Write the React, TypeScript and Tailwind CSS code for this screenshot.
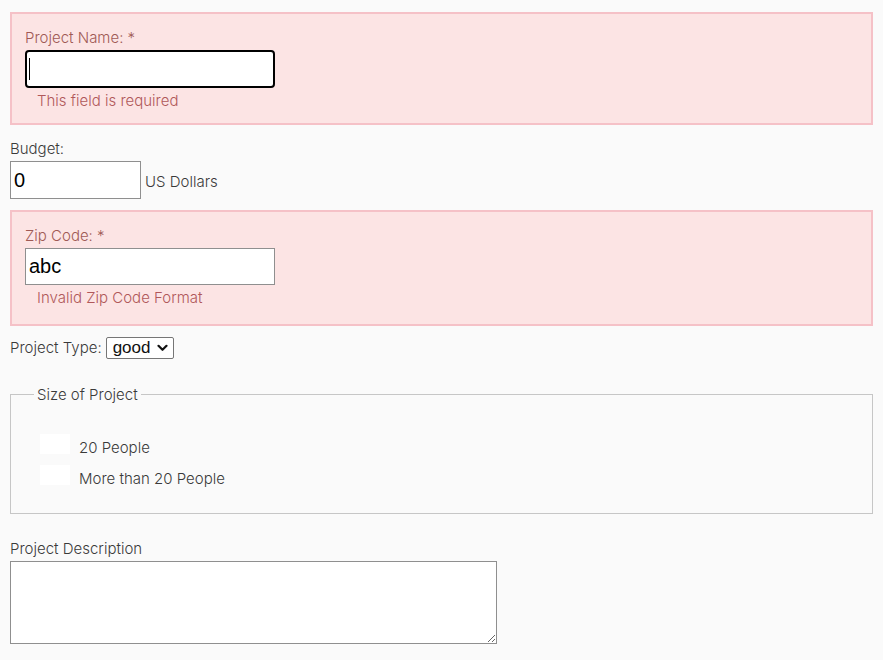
import React from 'react';

function ErrorBox({ label, error, children, last }: { label: string; error: string; children: React.ReactNode; last?: boolean }) {
  return (
    <div className={`border-2 border-[#f5c1c7] bg-[#fce4e4] px-[13px] pt-[14px] ${last ? 'pb-[18px]' : 'pb-[14px]'}`}>
      <label className="block h-[20px] leading-[20px] text-[#a05a55]">{label}</label>
      <div className="mt-[2px]">{children}</div>
      <div className="mt-[4px] pl-[12px] leading-[17px] text-[#b0585a]">{error}</div>
    </div>
  );
}

export default function App() {
  return (
    <div className="min-h-screen bg-[#fafafa] px-[10px] pt-[12px] pb-4 font-['Inter_Light','Inter','Noto_Sans',sans-serif] text-[15px] font-light text-[#3a3a3a]">
      {/* Project name */}
      <ErrorBox label="Project Name: *" error="This field is required">
        <div className="relative h-[38px] w-[250px]">
          <input
            type="text"
            defaultValue=""
            className="h-[38px] w-[250px] rounded-[4px] border-2 border-black bg-white px-[3px] font-['Liberation_Sans',Arial,sans-serif] text-[20px] font-normal text-black outline-none"
          />
          <span className="pointer-events-none absolute left-[4px] top-[8px] h-[22px] w-px bg-black" />
        </div>
      </ErrorBox>

      {/* Budget */}
      <div className="mt-[15px] leading-[17px]">Budget:</div>
      <div className="mt-[4px] flex items-center">
        <input
          type="text"
          defaultValue="0"
          className="h-[38px] w-[131px] border border-[#8f8f8f] bg-white px-[3px] font-['Liberation_Sans',Arial,sans-serif] text-[20px] font-normal text-black outline-none"
        />
        <span className="ml-[4px] pt-[4px]">US Dollars</span>
      </div>

      {/* Zip */}
      <div className="mt-[11px]">
        <ErrorBox label="Zip Code: *" error="Invalid Zip Code Format" last>
          <input
            type="text"
            defaultValue="abc"
            className="h-[37px] w-[250px] border border-[#8f8f8f] bg-white px-[3px] font-['Liberation_Sans',Arial,sans-serif] text-[20px] font-normal text-black outline-none"
          />
        </ErrorBox>
      </div>

      {/* Project type */}
      <div className="mt-[11px] flex h-[22px] items-center">
        <span>Project Type:</span>
        <div className="ml-[4px] flex h-[22px] w-[68px] items-center justify-between rounded-[2px] border border-[#767676] bg-white pl-[6px] pr-[5px] font-['Liberation_Sans',Arial,sans-serif] text-[17px] font-normal leading-none text-[#111]">
          <span className="-mt-[2px]">good</span>
          <svg width="11" height="8" viewBox="0 0 11 8" fill="none">
            <path d="M1.5 1.8 L5.5 5.8 L9.5 1.8" stroke="#111" strokeWidth="2.2" strokeLinecap="round" strokeLinejoin="round" />
          </svg>
        </div>
      </div>

      {/* Size of project */}
      <fieldset className="mt-[27px] border border-[#c6c6c6] pl-[29px] pt-[31px] pb-[28px]">
        <legend className="-ml-[6px] px-[3px] leading-[17px]">Size of Project</legend>
        <div className="flex flex-col gap-[11px]">
          <label className="flex items-end">
            <span className="h-[20px] w-[30px] bg-white" />
            <span className="ml-[9px] leading-[17px] translate-y-[2px]">20 People</span>
          </label>
          <label className="flex items-end">
            <span className="h-[20px] w-[30px] bg-white" />
            <span className="ml-[9px] leading-[17px] translate-y-[2px]">More than 20 People</span>
          </label>
        </div>
      </fieldset>

      {/* Description */}
      <div className="mt-[26px] leading-[17px]">Project Description</div>
      <textarea className="mt-[4px] block h-[83px] w-[487px] border border-[#8f8f8f] bg-white outline-none" />
    </div>
  );
}
